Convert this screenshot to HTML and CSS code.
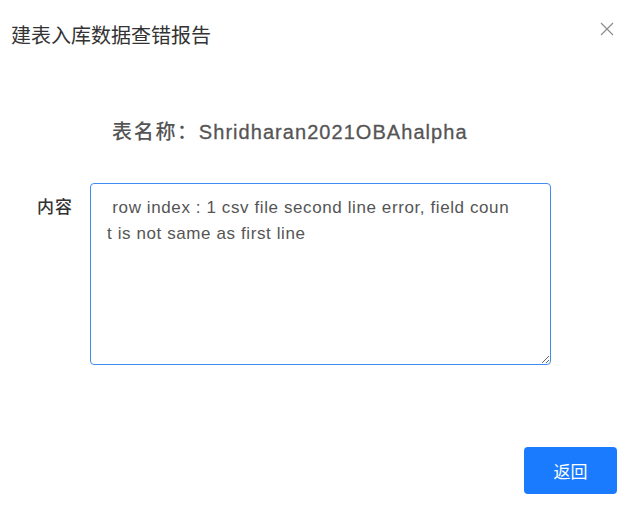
FILE: index.html
```html
<!DOCTYPE html>
<html lang="zh">
<head>
<meta charset="utf-8">
<title>建表入库数据查错报告</title>
<link rel="stylesheet" href="styles.css">
</head>
<body>
<div class="dialog">
  <div class="header">
    <h1 class="title">建表入库数据查错报告</h1>
    <button class="close" aria-label="关闭">
      <svg width="14" height="14" viewBox="0 0 14 14"><path d="M1 1L13 13M13 1L1 13" stroke="#8c8c8c" stroke-width="1.2" fill="none"/></svg>
    </button>
  </div>
  <div class="table-name"><span class="name-key">表名称：</span><span class="name-val">Shridharan2021OBAhalpha</span></div>
  <div class="row">
    <label class="label" for="content">内容</label>
    <textarea id="content" class="content"> row index : 1 csv file second line error, field count is not same as first line</textarea>
  </div>
  <div class="footer">
    <button class="btn-primary">返回</button>
  </div>
</div>
</body>
</html>
```
FILE: styles.css
```css
html, body {
  margin: 0;
  padding: 0;
  background: #fff;
}
body {
  font-family: "Liberation Sans", "Noto Sans CJK SC", sans-serif;
  color: #333;
}
.dialog {
  width: 630px;
  height: 518px;
  box-sizing: border-box;
  padding-top: 21px;
}
.header {
  display: flex;
  justify-content: space-between;
  align-items: flex-start;
  padding: 0 16px 0 11px;
  height: 28px;
}
.title {
  margin: 0;
  font-family: "Noto Sans CJK SC", sans-serif;
  font-size: 20px;
  font-weight: 400;
  line-height: 28px;
  color: #333;
}
.close {
  border: 0;
  background: none;
  padding: 0;
  margin-top: 1px;
  width: 14px;
  height: 14px;
  display: flex;
}
.table-name {
  margin-top: 68px;
  padding-left: 112px;
  font-size: 20px;
  line-height: 28px;
  letter-spacing: 1px;
  color: #555;
}
.name-key {
  font-family: "Noto Sans CJK SC", sans-serif;
  font-weight: 500;
  letter-spacing: 1.7px;
}
.name-val {
  font-family: "Liberation Sans", sans-serif;
  font-weight: 400;
  letter-spacing: 1.05px;
  color: #555;
  -webkit-text-stroke: 0.3px #555;
}
.row {
  display: flex;
  align-items: flex-start;
  margin-top: 37px;
}
.label {
  width: 90px;
  box-sizing: border-box;
  padding-left: 37px;
  padding-top: 11px;
  font-family: "Noto Sans CJK SC", sans-serif;
  font-size: 17px;
  font-weight: 500;
  letter-spacing: 1px;
  line-height: 24px;
  color: #333;
}
.content {
  width: 461px;
  height: 182px;
  box-sizing: border-box;
  margin: 0;
  border: 1.5px solid #3f8cf3;
  border-radius: 4px;
  padding: 11px 36px 8px 16px;
  font-family: "Liberation Sans", "Noto Sans CJK SC", sans-serif;
  font-size: 17px;
  letter-spacing: 0.6px;
  line-height: 26px;
  color: #555;
  word-break: break-all;
  resize: vertical;
  outline: none;
}
.footer {
  display: flex;
  justify-content: flex-end;
  padding-right: 13px;
  margin-top: 82px;
}
.btn-primary {
  width: 93px;
  height: 47px;
  border: 0;
  border-radius: 4px;
  background: #1a7bff;
  color: #fff;
  font-family: "Noto Sans CJK SC", sans-serif;
  font-size: 17px;
  padding: 0;
}
```
